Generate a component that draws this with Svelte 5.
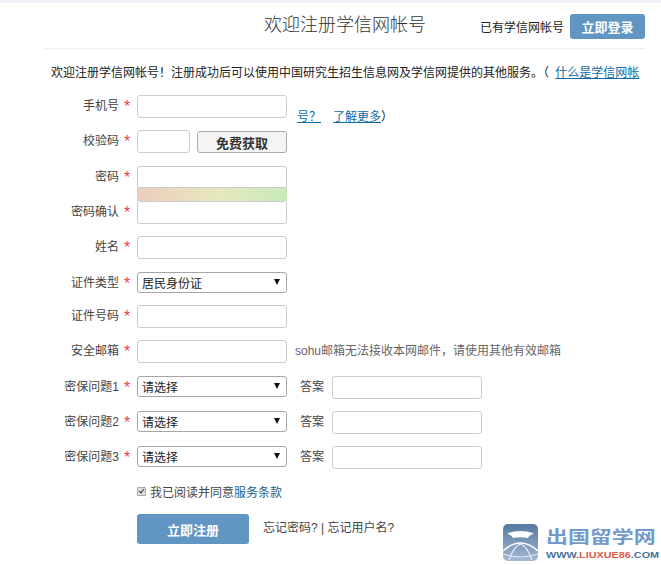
<script lang="ts">
	interface Row {
		label: string;
		kind: 'input' | 'code' | 'password' | 'select' | 'email' | 'question';
		value?: string;
		pitch?: 'wide' | 'short';
	}

	const rows: Row[] = [
		{ label: '手机号', kind: 'input' },
		{ label: '校验码', kind: 'code', pitch: 'wide' },
		{ label: '密码', kind: 'password' },
		{ label: '密码确认', kind: 'input' },
		{ label: '姓名', kind: 'input', pitch: 'wide' },
		{ label: '证件类型', kind: 'select', value: '居民身份证', pitch: 'short' },
		{ label: '证件号码', kind: 'input' },
		{ label: '安全邮箱', kind: 'email', pitch: 'wide' },
		{ label: '密保问题1', kind: 'question', value: '请选择' },
		{ label: '密保问题2', kind: 'question', value: '请选择' },
		{ label: '密保问题3', kind: 'question', value: '请选择' }
	];
</script>

<div class="page">
	<header class="top">
		<h1>欢迎注册学信网帐号</h1>
		<span class="have">已有学信网帐号</span>
		<button class="blue login">立即登录</button>
	</header>

	<p class="notice">
		欢迎注册学信网帐号！注册成功后可以使用中国研究生招生信息网及学信网提供的其他服务。（ <a href="#x" class="what">什么是学信网帐</a>
	</p>

	<form class="form">
		{#each rows as row, i}
			<div class="row {row.pitch ?? ''}">
				<label class="name" for="f{i}">{row.label}</label>
				<span class="star">*</span>

				{#if row.kind === 'code'}
					<input id="f{i}" class="text small" />
					<button type="button" class="get">免费获取</button>
				{:else if row.kind === 'password'}
					<div class="pw-box">
						<input id="f{i}" class="text" type="password" />
						<div class="meter"></div>
					</div>
				{:else if row.kind === 'select' || row.kind === 'question'}
					<div class="select">
						<select id="f{i}"><option>{row.value}</option></select>
					</div>
					{#if row.kind === 'question'}
						<span class="answer">答案</span>
						<input class="text" />
					{/if}
				{:else}
					<input id="f{i}" class="text" />
				{/if}

				{#if i === 0}
					<span class="more"><a href="#x">号？</a><a href="#x" class="learn">了解更多</a>）</span>
				{/if}
				{#if row.kind === 'email'}
					<span class="hint">sohu邮箱无法接收本网邮件，请使用其他有效邮箱</span>
				{/if}
			</div>
		{/each}

		<label class="agree">
			<input type="checkbox" checked />
			<span>我已阅读并同意<a href="#x">服务条款</a></span>
		</label>

		<div class="submit">
			<button type="button" class="blue register">立即注册</button>
			<span class="forgot">忘记密码? | 忘记用户名?</span>
		</div>
	</form>

	<div class="mark">
		<svg width="35" height="37" viewBox="0 0 35 37">
			<defs>
				<linearGradient id="tile" x1="0" y1="0" x2="0" y2="1">
					<stop offset="0" stop-color="#55789f" />
					<stop offset="1" stop-color="#a3b8d3" />
				</linearGradient>
			</defs>
			<rect width="35" height="37" rx="5" fill="url(#tile)" />
			<path d="M5 9 Q17.5 5 30 9 Q31 10 29 10.5 Q26 11 25 14 Q17.5 12.5 10 14 Q9 11 6 10.5 Q4 10 5 9 Z" fill="#fff" />
			<path d="M0 27 Q17.5 11 35 27" fill="none" stroke="#fff" stroke-width="1.4" />
			<path d="M6 36 Q11 22 17.5 20 Q24 22 29 36" fill="none" stroke="#eef2f7" stroke-width="1.1" />
			<path d="M0 30 Q17.5 36 35 30" fill="none" stroke="#eef2f7" stroke-width="0.9" />
		</svg>
		<div class="mark-text">
			<strong>出国留学网</strong>
			<small>WWW.<em>LIUXUE86</em>.COM</small>
		</div>
	</div>
</div>

<style>
	:global(body) {
		margin: 0;
		background: #fff;
	}

	.page {
		position: relative;
		width: 661px;
		height: 565px;
		overflow: hidden;
		border-top: 3px solid #eef2f6;
		box-sizing: border-box;
		color: #333;
		font: 12px "Liberation Sans", "Noto Sans CJK SC", sans-serif;
	}

	.top {
		display: flex;
		align-items: center;
		height: 46px;
		margin: 0 16px 0 44px;
		padding: 2px 0 0 220px;
		border-bottom: 1px solid #eee;
		box-sizing: border-box;
	}

	h1 {
		margin: 0 54px 0 0;
		font-size: 18px;
		font-weight: 300;
		line-height: 43px;
		transform: translateY(-1px);
	}

	.have {
		margin-right: 6px;
		color: #222;
	}

	.blue {
		border: 0;
		border-radius: 3px;
		background: #6195c2;
		color: #fff;
		font: bold 13px "Liberation Sans", "Noto Sans CJK SC", sans-serif;
		padding: 0;
	}

	.login {
		width: 75px;
		height: 25px;
	}

	.notice {
		margin: 0;
		padding: 16px 0 0 51px;
		line-height: 16px;
		white-space: nowrap;
		color: #222;
	}

	a {
		color: #0f6aa8;
	}

	.what {
		margin-left: 3px;
	}

	.form {
		margin-top: 14px;
	}

	.row {
		display: flex;
		align-items: flex-start;
		height: 35px;
	}

	.row.wide {
		height: 36px;
	}

	.row.short {
		height: 33px;
	}

	.name {
		width: 119px;
		flex: none;
		text-align: right;
		line-height: 23px;
		color: #444;
		white-space: nowrap;
	}

	.star {
		width: 18px;
		flex: none;
		text-align: center;
		color: #e8434f;
		font-size: 16px;
		line-height: 23px;
		padding-right: 2px;
		box-sizing: border-box;
	}

	.text {
		width: 150px;
		height: 23px;
		flex: none;
		box-sizing: border-box;
		border: 1px solid #ccc;
		border-radius: 3px;
		background: #fff;
		padding: 0 4px;
		outline: none;
	}

	.text.small {
		width: 53px;
	}

	.get {
		width: 90px;
		height: 22px;
		margin: 1px 0 0 7px;
		padding: 0;
		border: 1px solid #aaa;
		border-radius: 3px;
		background: #f4f4f4;
		color: #333;
		font: bold 13px "Liberation Sans", "Noto Sans CJK SC", sans-serif;
	}

	.pw-box {
		width: 150px;
	}

	.pw-box .text {
		display: block;
		height: 22px;
		border-bottom-left-radius: 0;
		border-bottom-right-radius: 0;
	}

	.meter {
		height: 13px;
		background: linear-gradient(to right, #eccdbd, #e6e8bd 55%, #c8eabb);
	}

	.select {
		position: relative;
		width: 150px;
		height: 21px;
		flex: none;
	}

	.select select {
		display: block;
		width: 100%;
		height: 100%;
		appearance: none;
		box-sizing: border-box;
		border: 1px solid #a6a6a6;
		border-radius: 3px;
		background: #fff;
		color: #222;
		padding: 2px 0 0 4px;
		font: 12px "Liberation Sans", "Noto Sans CJK SC", sans-serif;
	}

	.select::after {
		content: "";
		position: absolute;
		right: 7px;
		top: 7px;
		border: 3px solid transparent;
		border-top: 6px solid #111;
		border-bottom: 0;
		pointer-events: none;
	}

	.answer {
		width: 45px;
		flex: none;
		box-sizing: border-box;
		padding-left: 13px;
		line-height: 23px;
		color: #444;
	}

	.more {
		margin: 14px 0 0 10px;
		line-height: 16px;
		white-space: nowrap;
		color: #222;
	}

	.learn {
		margin-left: 12px;
	}

	.hint {
		margin-left: 8px;
		line-height: 23px;
		color: #666;
		white-space: nowrap;
	}

	.agree {
		display: flex;
		align-items: center;
		height: 16px;
		margin: 2px 0 0 137px;
		color: #444;
		white-space: nowrap;
	}

	.agree a {
		color: #17638f;
		text-decoration: none;
	}

	.agree input {
		appearance: none;
		position: relative;
		width: 9px;
		height: 9px;
		margin: 0 4px 0 0;
		box-sizing: border-box;
		border: 1px solid #aaa;
		border-radius: 1px;
		background: #ddd;
	}

	.agree input::before {
		content: "";
		position: absolute;
		left: 2px;
		top: 0;
		width: 2px;
		height: 4px;
		border: solid #333;
		border-width: 0 1.5px 1.5px 0;
		transform: rotate(40deg);
	}

	.submit {
		display: flex;
		align-items: center;
		margin: 15px 0 0 137px;
	}

	.register {
		width: 112px;
		height: 30px;
	}

	.forgot {
		margin: 0 0 5px 14px;
		color: #444;
	}

	.mark {
		position: absolute;
		left: 503px;
		top: 521px;
		display: flex;
		gap: 8px;
		align-items: flex-start;
	}

	.mark-text {
		display: flex;
		flex-direction: column;
	}

	.mark-text strong {
		font-size: 17px;
		line-height: 20px;
		margin-top: 4px;
		font-weight: 700;
		color: #7399cb;
		white-space: nowrap;
		transform: scaleX(1.29);
		transform-origin: left center;
	}

	.mark-text small {
		font-size: 9.5px;
		line-height: 11px;
		margin-top: 1px;
		font-weight: bold;
		color: #4d6f9a;
		white-space: nowrap;
		transform: scaleX(1.14);
		transform-origin: left center;
	}

	.mark-text em {
		font-style: normal;
		color: #d9604c;
	}
</style>
